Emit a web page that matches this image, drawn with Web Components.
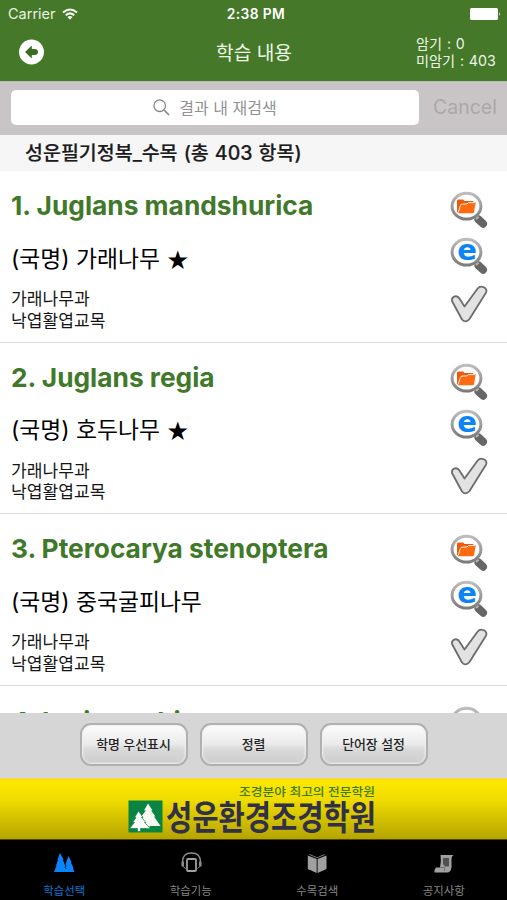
<!DOCTYPE html>
<html lang="ko">
<head>
<meta charset="utf-8">
<title>학습 내용</title>
<style>
html,body{margin:0;height:100%;overflow:hidden;background:#fff}
body{font-family:Inter,"Noto Sans CJK KR",sans-serif;color:#000}
</style>
</head>
<body>
<study-app></study-app>
<script>
function define(name, html) {
  const t = document.createElement('template');
  t.innerHTML = html;
  customElements.define(name, class extends HTMLElement {
    constructor() {
      super();
      this.attachShadow({mode: 'open'}).appendChild(t.content.cloneNode(true));
    }
  });
}

define('status-bar', `<style>
:host{display:grid;grid-template-columns:1fr auto 1fr;align-items:center;height:27px;padding:0 6px 0 8px;color:#fff;font-size:14px;box-sizing:border-box;line-height:20px}
.l{display:flex;align-items:center;gap:6px;color:#e8f4e0;font-size:14.5px}
.t{font-weight:600;font-size:13.8px;letter-spacing:.4px;padding-left:3px}
.b{justify-self:end;display:block}
</style>
<div class="l"><span>Carrier</span><svg width="16" height="12" viewBox="0 0 16 12" fill="none" stroke="#f4faf0" stroke-width="2"><path d="M1 4.6Q8-1.6 15 4.6M3.7 7.3Q8 3.5 12.3 7.3"/><path d="M5.4 9.1Q8 7 10.6 9.1L8 11.8Z" fill="#f4faf0" stroke="none"/></svg></div>
<span class="t">2:38 PM</span>
<svg class="b" width="31" height="12" viewBox="0 0 31 12" fill="#fff"><rect x="0" y="0" width="28" height="12" rx="1.5"/><path d="M29 4Q30.8 6 29 8Z"/></svg>`);

define('nav-bar', `<style>
:host{display:grid;grid-template-columns:1fr auto 1fr;height:54px;padding:0 11px 0 19px;box-sizing:border-box;color:#edf7e7}
svg{margin-top:12px;display:block}
h1{margin:13px 7px 0 0;font-size:19.2px;font-weight:400;line-height:27px}
.c{justify-self:end;width:80px;margin-top:8px;font-size:14.2px;line-height:17px;white-space:nowrap;word-spacing:.8px}
</style>
<svg width="26" height="26" viewBox="0 0 26 26"><circle cx="12.5" cy="13" r="12.5" fill="#fff"/><path d="M6 13L12.8 6.4V10H15.5Q19 10 19 13Q19 16 15.5 16H12.8V19.6Z" fill="#3c6b22"/></svg>
<h1><slot></slot></h1>
<div class="c"><slot name="counts"></slot></div>`);

define('search-bar', `<style>
:host{display:flex;align-items:center;height:54px;background:#c9c5c6;padding:0 10px 2px 11px;box-sizing:border-box;border-top:1px solid #b9bfb4}
.f{width:408px;height:35px;background:#fff;border-radius:5px;display:flex;align-items:center;justify-content:center;gap:9px;color:#929294;font-size:16px;box-sizing:border-box;padding-bottom:2px}
.c{margin-left:14px;color:#aaa8aa;font-size:19.5px;padding-bottom:1px}
svg{display:block;margin-top:1px}
</style>
<div class="f"><svg width="17" height="17" viewBox="0 0 17 17" fill="none" stroke="#88888a" stroke-width="1.3"><circle cx="6.7" cy="6.7" r="5.8"/><path d="M11 11L16 16" stroke-width="1.7"/></svg><span><slot></slot></span></div><span class="c">Cancel</span>`);

define('section-title', `<style>
:host{display:block;height:36px;line-height:37px;background:#f6f6f6;padding-left:25px;font-size:19.5px;font-weight:500;color:#1c1c1e;white-space:nowrap;word-spacing:.9px;-webkit-text-stroke:.2px #1c1c1e}
</style><slot></slot>`);

define('lens-icon', `<style>:host{display:block;width:38px;height:38px}svg{display:block}</style>
<svg width="38" height="38" viewBox="0 0 38 38">
<defs><linearGradient id="g" x1="0" y1="0" x2="0" y2="1"><stop offset="0" stop-color="#bdbdbd"/><stop offset="1" stop-color="#7c7c7c"/></linearGradient></defs>
<path d="M28.500 28.500L33 32.700" stroke="#666" stroke-width="8" stroke-linecap="round"/>
<path d="M25 24.500L28 27.500" stroke="#b4b4b4" stroke-width="3.5"/>
<ellipse cx="16.500" cy="15.200" rx="14.400" ry="12.900" fill="#fff" stroke="url(#g)" stroke-width="3"/></svg>`);

define('folder-lens', `<style>:host{display:grid;width:38px;height:38px}lens-icon,svg{grid-area:1/1}svg{z-index:1}</style>
<lens-icon></lens-icon><svg width="38" height="38" viewBox="0 0 38 38"><path d="M7 21.500V10Q7 8.600 8.500 8.600H13L14.700 10H22.500Q23.800 10 23.800 11.500V13" fill="#ee5a08"/><path d="M8 22.300L10.300 14.400Q10.700 13 12.100 13L17 12.600L18.500 11.300L25.800 11.300L24 21Q23.700 22.300 22.300 22.300Z" fill="#ff6a10"/><path d="M8.300 21L10.300 14.600Q10.700 13.200 12.100 13.100L17 12.900L18.500 11.600H25" fill="none" stroke="#fff" stroke-width=".9"/></svg>`);

define('web-lens', `<style>:host{display:grid;width:38px;height:38px}lens-icon,span{grid-area:1/1}span{z-index:1;font:bold 29px/32px "DejaVu Sans",sans-serif;color:#0a84f6;width:34px;text-align:center;margin-top:-3px}</style>
<lens-icon></lens-icon><span>e</span>`);

define('check-mark', `<style>:host{display:block;width:38px;height:38px}svg{display:block}</style>
<svg width="38" height="38" viewBox="0 0 38 38"><path d="M2 16Q1.500 12.500 4.800 11.400Q7.800 10.600 9.400 13.500L14.500 21.500L27.500 3.700Q30 .6 33.500 2.200Q37.800 4 35.800 8L19.500 34Q15.500 38.500 12 34.500Z" fill="#e2e2e2" stroke="#6c6c6c" stroke-width="1.8" stroke-linejoin="round"/></svg>`);

define('tree-row', `<style>
:host{display:flex;justify-content:space-between;height:171.5px;box-sizing:border-box;border-bottom:1px solid #dcdcdf;padding:0 19px 0 11px;background:#fff;flex:none}
.t{padding-top:20px;white-space:nowrap}
h2{margin:0;font-size:26.3px;line-height:30px;font-weight:700;color:#41792a}
.k{margin-top:21.5px;font-size:22.8px;line-height:32px}
.d{margin-top:13.500px;font-size:17.1px;line-height:21.5px;color:#161616}
.i{display:flex;flex-direction:column;padding-top:20px}
web-lens{margin-top:8px}check-mark{margin-top:10px}
</style>
<div class="t"><h2><slot name="name"></slot></h2><div class="k"><slot name="korean"></slot></div><div class="d"><slot></slot></div></div>
<div class="i"><folder-lens></folder-lens><web-lens></web-lens><check-mark></check-mark></div>`);

define('tool-button', `<style>
:host{display:flex;align-items:center;justify-content:center;width:108px;height:43px;box-sizing:border-box;border:2px solid #b0b0b0;border-radius:11px;background:linear-gradient(#fcfcfc,#ebebeb 48%,#d9d9d9 62%,#cdcdcd);box-shadow:inset 0 0 2px 1px #f1f1f1;font-size:12.9px;font-weight:500;color:#222;padding-bottom:2px}
</style><slot></slot>`);

define('academy-banner', `<style>
:host{display:flex;justify-content:center;height:62px;box-sizing:border-box;background:linear-gradient(#ffe900,#eedb00 35%,#b5a400);border-top:2px solid #f5dc30;border-bottom:1px solid #4d4500}
svg{display:block}
text{font-family:"Liberation Sans","Noto Sans CJK KR",sans-serif}
</style>
<svg width="507" height="59" viewBox="0 780 507 59">
<text x="239" y="795.500" font-size="11.5" font-weight="500" fill="#3d7c1c" textLength="136" lengthAdjust="spacingAndGlyphs">조경분야 최고의 전문학원</text>
<rect x="128.500" y="800.500" width="34" height="32" fill="#098443"/>
<path d="M148 803.500L152.500 810.500H151L155.500 816.500H154L160.500 826H149.500V829H146.500V826H137L143 816.500H141L146 810.500H144Z" fill="#f7faf0"/>
<path d="M138.500 811L143 817.500H141.500L146 822.500H144.500L150.500 828.500H140.500V831.500H137.500V828.500H129.500L134.500 822.500H132.500L136 817.500H134.500Z" fill="#fff" stroke="#098443" stroke-width=".7"/>
<text transform="translate(166 829.500) scale(1 1.26)" font-size="27" font-weight="700" fill="#303049" textLength="210" lengthAdjust="spacingAndGlyphs">성운환경조경학원</text>
</svg>`);

define('tab-item', `<style>
:host{display:flex;flex-direction:column;align-items:center;flex:1;color:#858585;font-size:11.4px;line-height:16px;padding-top:11px}
::slotted(svg){display:block;margin-bottom:8px}
</style><slot name="icon"></slot><span><slot></slot></span>`);

define('tab-bar', `<style>:host{display:flex;height:60px;background:#000;padding:0 0 0 1px;box-sizing:border-box}.on{color:#0876d8}</style>
<tab-item class="on"><svg slot="icon" width="24" height="24" viewBox="0 0 24 24" fill="#0a84ff"><path d="M8 2L11.500 8.500L10.800 9L13.500 15L13 15.500L14.500 21H2L4.500 15L4 14.500L6 9L5.500 8.500Z"/><path d="M16.500 5L19.500 11L19 11.500L21.500 17L21 17.500L22.500 21H12L13.500 15L13 14.500L15 9Z"/><path d="M12.500 12L14 15L13 16.500L14.500 18" stroke="#001a33" fill="none" stroke-width=".9"/></svg>학습선택</tab-item>
<tab-item><svg slot="icon" width="24" height="24" viewBox="0 0 24 24" fill="none" stroke="#8c8c8c"><path d="M3.500 11Q3.500 2 12.500 2Q21.500 2 21.500 11" stroke-width="1.300"/><path d="M3.700 11.500V14.500M21.300 11.500V14.500" stroke-width="2.600" stroke-linecap="round"/><path d="M4 15.500L6.500 17.500M21 15.500L18.500 17.500"/><rect x="8" y="8" width="9" height="12" rx="1" stroke-width="1.800" stroke="#a0a0a0"/></svg>학습기능</tab-item>
<tab-item><svg slot="icon" width="24" height="24" viewBox="0 0 24 24" fill="#a0a0a0"><path d="M2.800 4.500L11.700 8V22L2.800 18ZM12.600 8L21.500 4.500V18L12.600 22Z"/><path d="M4.500 3.500L12.100 6.700L19.800 3.500" fill="none" stroke="#777"/></svg>수목검색</tab-item>
<tab-item><svg slot="icon" width="24" height="24" viewBox="0 0 24 24" fill="#a0a0a0"><path d="M8.500 4H21.500Q19.500 5 19.500 8V16Q19 21.500 15 21.500H2.500Q2 18.500 4 16.500H8Q9.500 10 8.500 4Z"/><path d="M11 7H17V15.500H13L11 13Z" fill="#505050"/><path d="M8 16.500H12.500V20" fill="none" stroke="#666" stroke-width=".8"/></svg>공지사항</tab-item>`);

define('study-app', `<style>
:host{display:flex;flex-direction:column;width:507px;height:900px;overflow:hidden}
header{background:#457829;height:81px}
header,search-bar,section-title,.tools,academy-banner,tab-bar{flex:none}
.list{flex:1;min-height:0;overflow:hidden;display:flex;flex-direction:column}
.tools{height:65px;box-sizing:border-box;background:#d6d6d6;display:flex;justify-content:center;align-items:flex-start;gap:12px;padding-top:10px}
small{display:block;font-size:inherit}
.last{display:block;padding-top:1px}
.star{font-family:"Noto Sans CJK KR",sans-serif;font-size:21px;line-height:24px;margin-left:1px}
</style>
<header><status-bar></status-bar><nav-bar>학습 내용<small slot="counts">암기 : 0</small><small slot="counts">미암기 : 403</small></nav-bar></header>
<search-bar>결과 내 재검색</search-bar>
<section-title>성운필기정복_수목 (총 403 항목)</section-title>
<div class="list">
<tree-row><span slot="name">1. Juglans mandshurica</span><span slot="korean">(국명) 가래나무 <span class="star">★</span></span>가래나무과<br>낙엽활엽교목</tree-row>
<tree-row><span slot="name">2. Juglans regia</span><span slot="korean">(국명) 호두나무 <span class="star">★</span></span>가래나무과<br>낙엽활엽교목</tree-row>
<tree-row><span slot="name">3. Pterocarya stenoptera</span><span slot="korean">(국명) 중국굴피나무</span>가래나무과<br>낙엽활엽교목</tree-row>
<tree-row><span slot="name" class="last">4. Larix sachi</span></tree-row>
</div>
<div class="tools"><tool-button>학명 우선표시</tool-button><tool-button>정렬</tool-button><tool-button>단어장 설정</tool-button></div>
<academy-banner></academy-banner>
<tab-bar></tab-bar>`);
</script>
</body>
</html>
